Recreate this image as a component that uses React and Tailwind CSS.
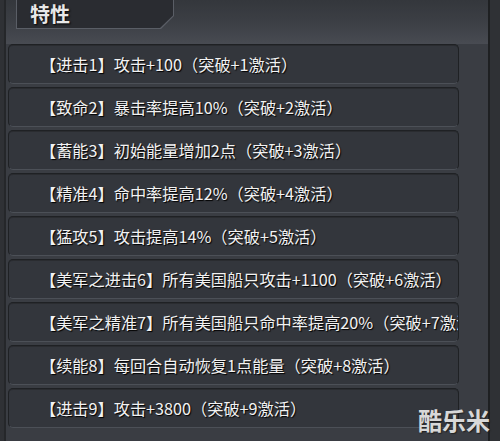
const traits = [
  "【进击1】攻击+100（突破+1激活）",
  "【致命2】暴击率提高10%（突破+2激活）",
  "【蓄能3】初始能量增加2点（突破+3激活）",
  "【精准4】命中率提高12%（突破+4激活）",
  "【猛攻5】攻击提高14%（突破+5激活）",
  "【美军之进击6】所有美国船只攻击+1100（突破+6激活）",
  "【美军之精准7】所有美国船只命中率提高20%（突破+7激活）",
  "【续能8】每回合自动恢复1点能量（突破+8激活）",
  "【进击9】攻击+3800（突破+9激活）",
];

function TraitRow({ text }) {
  return (
    <div className="h-[40px] flex items-center overflow-hidden whitespace-nowrap rounded-[5px] border border-[#1f2124] border-b-[#4c5057] bg-[#33363c] pl-[31px] pr-[2px] shadow-[inset_0_1px_0_#2a2c30]">
      <span className="text-[16.2px] leading-none text-[#f2f2f2] [text-shadow:1px_1px_1px_#000]">
        {text}
      </span>
    </div>
  );
}

export default function App() {
  return (
    <div
      className="relative w-[500px] h-[441px] overflow-hidden bg-[#2f3135]"
      style={{ fontFamily: '"Noto Sans CJK SC", "Noto Sans", sans-serif' }}
    >
      <div className="ml-[4px] w-[486px] h-full border-l-2 border-r-2 border-l-[#25272a] border-r-[#1e2022] bg-[#3a3d43]">
        {/* header tab */}
        <div className="h-[44px] bg-gradient-to-b from-[#34373c] via-[#3c3f45] to-[#484b52]">
          <div className="ml-[10px] w-[158px] h-[29px] bg-[#5a5e66] [clip-path:polygon(0_0,100%_0,100%_55%,calc(100%-13px)_100%,0_100%)] px-[1px] pb-[1px]">
            <div className="w-full h-full bg-[#2a2c31] [clip-path:polygon(0_0,100%_0,100%_55%,calc(100%-13px)_100%,0_100%)] flex items-center pl-[13px]">
              <span className="text-[20px] font-bold leading-none text-[#e8e8e8] [text-shadow:1px_1px_2px_#000]">
                特性
              </span>
            </div>
          </div>
        </div>

        <div className="flex flex-col gap-[3px] pl-[2px] w-[453px]">
          {traits.map((t) => (
            <TraitRow key={t} text={t} />
          ))}
        </div>
      </div>

      <div className="absolute right-[10px] bottom-[9px] text-[24px] font-bold leading-none text-[#d8d8d8] [text-shadow:1px_1px_1px_#222]">
        酷乐米
      </div>
    </div>
  );
}
